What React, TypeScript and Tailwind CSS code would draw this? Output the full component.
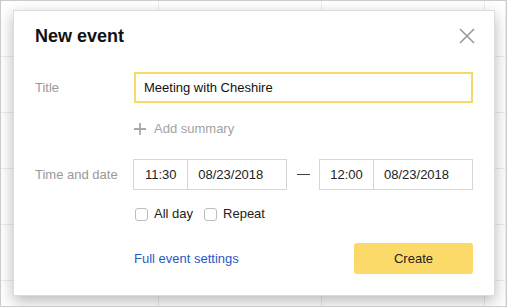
import React from 'react';

const font = { fontFamily: '"Liberation Sans", Arial, sans-serif' };

const Checkbox = ({ label }: { label: string }) => (
  <label className="flex items-center gap-[6px] text-[13px] text-[#222]">
    <span className="w-[13px] h-[13px] rounded-[3px] border border-[#bdbdbd] bg-white" />
    <span>{label}</span>
  </label>
);

const TimeBox = ({ time, date }: { time: string; date: string }) => (
  <div className="flex h-[31px] text-[13px] text-[#222]">
    <div className="w-[55px] border border-[#d6d6d6] flex items-center justify-center">{time}</div>
    <div className="w-[99px] border border-l-0 border-[#d6d6d6] flex items-center px-[10px]">{date}</div>
  </div>
);

export default function App() {
  const cells = Array.from({ length: 24 });

  return (
    <div className="relative w-[507px] h-[307px] overflow-hidden bg-white border border-[#cbcbcb]" style={font}>
      {/* calendar grid behind */}
      <div className="grid grid-cols-[158px_163px_163px_1fr] grid-rows-[56px_56px_56px_56px_56px_56px] w-full h-full">
        {cells.map((_, i) => (
          <div key={i} className="border-r border-b border-[#ececec]" />
        ))}
      </div>

      {/* dialog */}
      <div className="absolute left-[12px] top-[9px] w-[482px] h-[286px] bg-white border border-[#dcdcdc] shadow-[0_5px_14px_rgba(0,0,0,0.28)] px-[21px] pt-[12px] flex flex-col">
        <div className="flex items-center justify-between h-[26px]">
          <h1 className="text-[18px] font-bold text-[#111]">New event</h1>
          <button className="w-[16px] h-[16px] mr-[-2px] text-[#9a9a9a]">
            <svg viewBox="0 0 16 16" className="w-[16px] h-[16px]" fill="none" stroke="currentColor" strokeWidth="1.6">
              <path d="M1 1 L15 15 M15 1 L1 15" />
            </svg>
          </button>
        </div>

        <div className="flex items-center mt-[23px]">
          <div className="w-[99px] text-[13px] text-[#999]">Title</div>
          <div className="w-[339px] h-[31px] border-2 border-[#fbd865] flex items-center px-[8px] text-[13px] text-[#111]">
            Meeting with Cheshire
          </div>
        </div>

        <div className="flex items-center mt-[14px] h-[24px] pl-[99px] text-[13px] text-[#a3a3a3] gap-[7px]">
          <svg viewBox="0 0 14 14" className="w-[14px] h-[14px] ml-[-1px]" fill="none" stroke="#a8a8a8" strokeWidth="1.8">
            <path d="M7 1 V13 M1 7 H13" />
          </svg>
          <span>Add summary</span>
        </div>

        <div className="flex items-center mt-[18px]">
          <div className="w-[99px] text-[13px] text-[#999]">Time and date</div>
          <TimeBox time="11:30" date="08/23/2018" />
          <div className="w-[32px] flex justify-center">
            <span className="w-[13px] h-px bg-[#444]" />
          </div>
          <TimeBox time="12:00" date="08/23/2018" />
        </div>

        <div className="flex items-center mt-[14px] h-[20px] pl-[100px] gap-[11px]">
          <Checkbox label="All day" />
          <Checkbox label="Repeat" />
        </div>

        <div className="flex items-center justify-between mt-[19px] pl-[99px]">
          <a className="text-[13px] text-[#1f5bc9]">Full event settings</a>
          <button className="w-[119px] h-[31px] rounded-[3px] bg-[#fbda69] text-[13px] text-[#222]">Create</button>
        </div>
      </div>
    </div>
  );
}
